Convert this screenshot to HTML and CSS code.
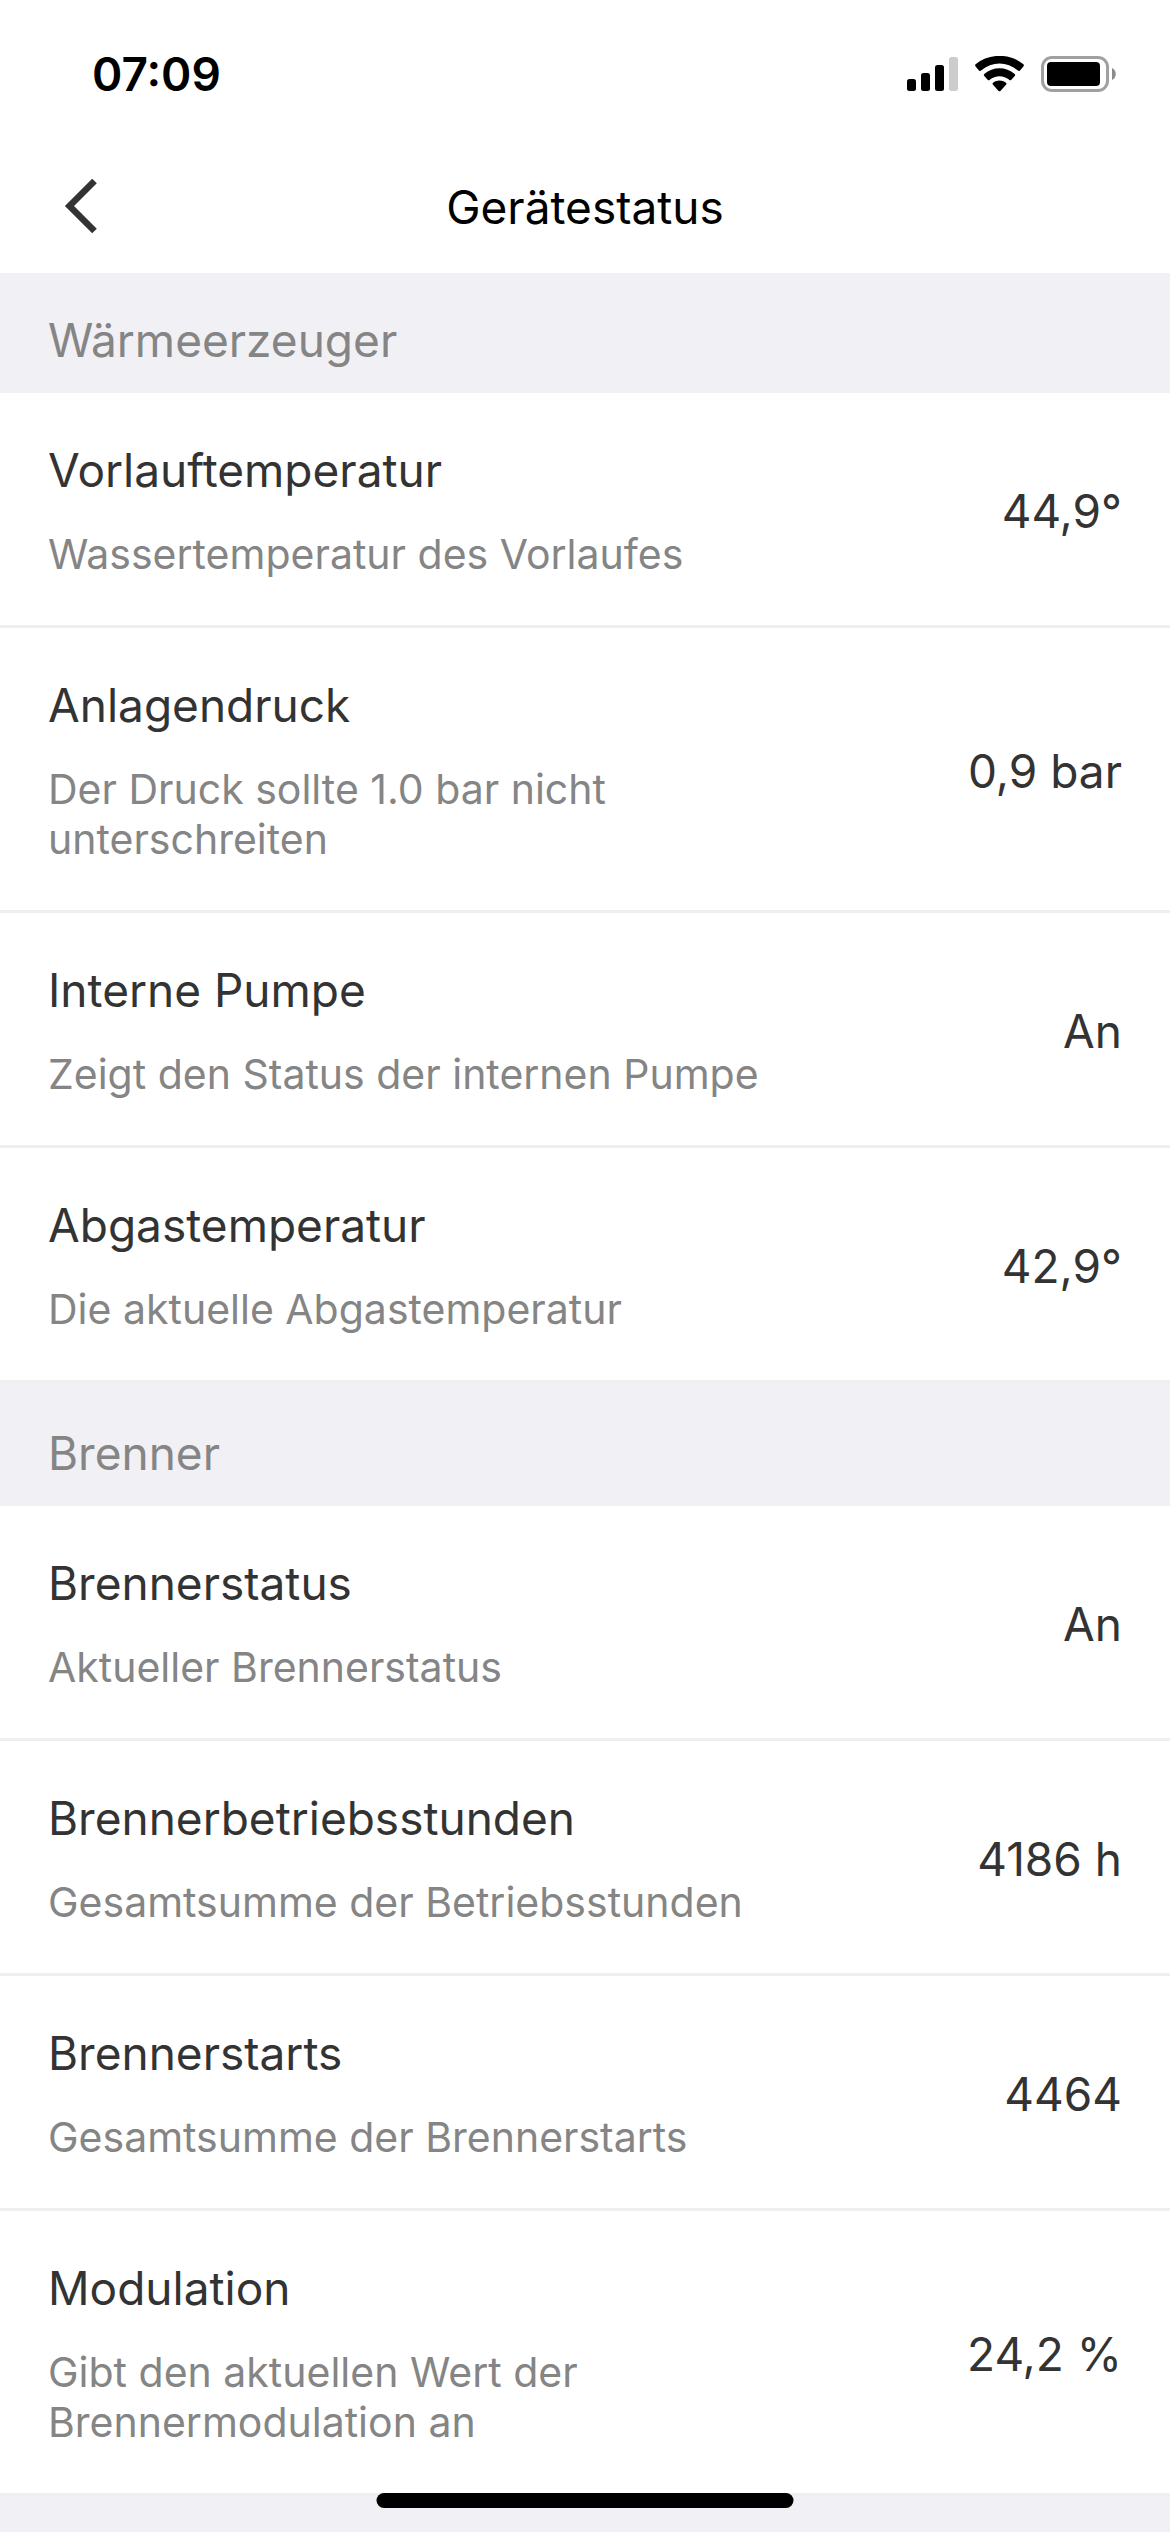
FILE: index.html
```html
<!DOCTYPE html>
<html lang="de">
<head>
<meta charset="utf-8">
<meta name="viewport" content="width=device-width, initial-scale=1">
<title>Gerätestatus</title>
<link rel="stylesheet" href="styles.css">
</head>
<body>
<div class="status-bar">
  <time class="clock">07:09</time>
  <div class="indicators">
    <svg width="51" height="36" viewBox="0 0 51 36" aria-hidden="true">
      <rect x="0" y="23" width="9" height="12" rx="2.5"/>
      <rect x="14" y="17" width="9" height="18" rx="2.5"/>
      <rect x="28" y="9" width="9" height="26" rx="2.5"/>
      <rect x="42" y="1" width="9" height="34" rx="2.5" fill="#cccccc"/>
    </svg>
    <svg width="49" height="36" viewBox="0 0 49 36" aria-hidden="true">
      <path d="M.6 10.400a1.500 1.500 0 0 1 0-2.100C14-3 35-3 48.400 8.300a1.500 1.500 0 0 1 0 2.100L45 14.400a1.500 1.500 0 0 1-2.100.1C32 5.300 17 5.300 6.100 14.500A1.500 1.500 0 0 1 4 14.400z"/>
      <path d="M9.300 20.100a1.500 1.500 0 0 1 0-2.200c8.700-7.600 21.700-7.600 30.400 0a1.500 1.500 0 0 1 0 2.200l-3.300 3.600a1.500 1.500 0 0 1-2.200.1c-5.600-4.700-13.800-4.700-19.400 0a1.500 1.500 0 0 1-2.200-.1z"/>
      <path d="M18 28.800a1.400 1.400 0 0 1 0-2.100c3.900-3 9.100-3 13 0a1.400 1.400 0 0 1 0 2.100l-5.600 6.100a1.300 1.300 0 0 1-1.800 0z"/>
    </svg>
    <svg width="75" height="36" viewBox="0 0 75 36" aria-hidden="true">
      <rect x="1.500" y="1.500" width="65" height="33" rx="9.500" fill="none" stroke="#a0a0a0" stroke-width="3"/>
      <rect x="6" y="6" width="53" height="24" rx="4"/>
      <path d="M71 12c5 2 5 10 0 12z" fill="#8c8c8c"/>
    </svg>
  </div>
</div>
<header class="nav">
  <button class="back" type="button" aria-label="Zurück">
    <svg width="34" height="56" viewBox="0 0 34 56" aria-hidden="true">
      <path d="M30.500 2L5.500 27l25 25" fill="none" stroke="#333333" stroke-width="6.500"/>
    </svg>
  </button>
  <h1 class="nav-title">Gerätestatus</h1>
</header>
<main class="groups">
  <section>
    <h2 class="group-title">Wärmeerzeuger</h2>
    <ul class="rows">
      <li class="row">
        <div class="info"><h3 class="label">Vorlauftemperatur</h3><p class="hint">Wassertemperatur des Vorlaufes</p></div>
        <span class="value">44,9°</span>
      </li>
      <li class="row">
        <div class="info"><h3 class="label">Anlagendruck</h3><p class="hint">Der Druck sollte 1.0 bar nicht unterschreiten</p></div>
        <span class="value">0,9 bar</span>
      </li>
      <li class="row">
        <div class="info"><h3 class="label">Interne Pumpe</h3><p class="hint">Zeigt den Status der internen Pumpe</p></div>
        <span class="value">An</span>
      </li>
      <li class="row">
        <div class="info"><h3 class="label">Abgastemperatur</h3><p class="hint">Die aktuelle Abgastemperatur</p></div>
        <span class="value">42,9°</span>
      </li>
    </ul>
  </section>
  <section>
    <h2 class="group-title">Brenner</h2>
    <ul class="rows">
      <li class="row">
        <div class="info"><h3 class="label">Brennerstatus</h3><p class="hint">Aktueller Brennerstatus</p></div>
        <span class="value">An</span>
      </li>
      <li class="row">
        <div class="info"><h3 class="label">Brennerbetriebsstunden</h3><p class="hint">Gesamtsumme der Betriebsstunden</p></div>
        <span class="value">4186 h</span>
      </li>
      <li class="row">
        <div class="info"><h3 class="label">Brennerstarts</h3><p class="hint">Gesamtsumme der Brennerstarts</p></div>
        <span class="value">4464</span>
      </li>
      <li class="row">
        <div class="info"><h3 class="label">Modulation</h3><p class="hint">Gibt den aktuellen Wert der Brennermodulation an</p></div>
        <span class="value">24,2 %</span>
      </li>
    </ul>
  </section>
</main>
<div class="home-indicator"></div>
</body>
</html>
```
FILE: styles.css
```css
* {
  box-sizing: border-box;
}

body {
  margin: 0;
  min-height: 100vh;
  background: #f1f0f5;
  color: #333333;
  font-family: Inter, "Liberation Sans", sans-serif;
  font-size: 46px;
  line-height: 58px;
}

h1, h2, h3, p, ul {
  margin: 0;
  padding: 0;
  font-size: inherit;
  font-weight: 400;
}

svg {
  display: block;
}

.status-bar {
  display: flex;
  align-items: center;
  justify-content: space-between;
  height: 141px;
  padding: 7px 54px 0 92px;
  background: #ffffff;
  color: #000000;
}

.clock {
  font-weight: 600;
}

.indicators {
  display: flex;
  gap: 17px;
}

.nav {
  display: grid;
  grid-template-columns: 1fr auto 1fr;
  align-items: center;
  height: 132px;
  padding: 0 48px;
  background: #ffffff;
}

.back {
  justify-self: start;
  padding: 16px;
  border: 0;
  background: none;
}

.nav-title {
  color: #000000;
}

.groups {
  display: grid;
  gap: 3px;
}

.group-title {
  padding: 38px 48px 24px;
  color: #858585;
}

.rows {
  list-style: none;
}

.row {
  display: flex;
  align-items: center;
  justify-content: space-between;
  padding: 48px 48px 46px;
  border-bottom: 3px solid #efeff0;
  background: #ffffff;
}

.info {
  display: grid;
  flex: 0 1 70%;
  gap: 30px;
}

.hint {
  color: #858585;
  font-size: 41px;
  line-height: 50px;
}

.value {
  padding-top: 2px;
  white-space: nowrap;
}

.home-indicator {
  position: fixed;
  bottom: 24px;
  left: 50%;
  width: 417px;
  height: 15px;
  border-radius: 8px;
  background: #000000;
  transform: translateX(-50%);
}
```
